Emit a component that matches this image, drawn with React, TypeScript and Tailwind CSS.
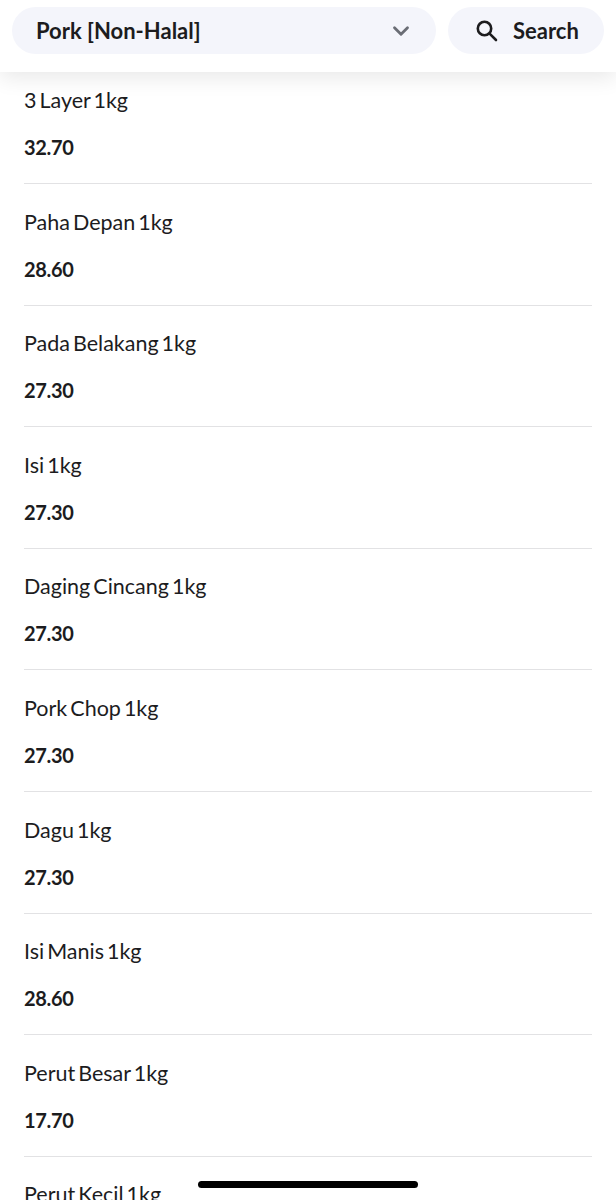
import { ChevronDown } from 'lucide-react';

const items = [
  { name: '3 Layer 1kg', price: '32.70' },
  { name: 'Paha Depan 1kg', price: '28.60' },
  { name: 'Pada Belakang 1kg', price: '27.30' },
  { name: 'Isi 1kg', price: '27.30' },
  { name: 'Daging Cincang 1kg', price: '27.30' },
  { name: 'Pork Chop 1kg', price: '27.30' },
  { name: 'Dagu 1kg', price: '27.30' },
  { name: 'Isi Manis 1kg', price: '28.60' },
  { name: 'Perut Besar 1kg', price: '17.70' },
  { name: 'Perut Kecil 1kg', price: '' },
];

const App = () => {
  return (
    <div className="relative h-[1200px] w-[616px] overflow-hidden bg-white font-['Lato','Noto_Sans',sans-serif] text-[#1c1c1e]">
      <header className="relative z-10 flex h-[72px] items-start gap-3 bg-white px-3 pt-[7px] shadow-[0_6px_20px_rgba(0,0,0,0.09)]">
        <div className="flex h-[47px] w-[424px] items-center justify-between rounded-full bg-[#f4f5fb] pl-6 pr-[22px]">
          <span className="text-[22px] font-bold">Pork [Non-Halal]</span>
          <ChevronDown size={26} strokeWidth={2.6} className="text-[#6a6d75]" />
        </div>
        <div className="flex h-[47px] w-[156px] items-center gap-[15px] rounded-full bg-[#f4f5fb] pl-[28px]">
          <svg width="22" height="22" viewBox="0 0 22 22" fill="none" stroke="currentColor" strokeWidth="2.6" strokeLinecap="round">
            <circle cx="8.5" cy="8.5" r="6.7" />
            <path d="M13.6 13.6 20 20" />
          </svg>
          <span className="text-[22px] font-bold">Search</span>
        </div>
      </header>
      <ul className="px-6 pt-[5px]">
        {items.map((item) => (
          <li key={item.name} className="mb-[14.6px] h-[107px] border-b border-[#e2e2e4] pt-[8px]">
            <div className="text-[21.5px] leading-[30px] [word-spacing:-2.5px]">{item.name}</div>
            <div className="pt-[17px] text-[20px] font-bold leading-[30px] tracking-[-0.3px]">{item.price}</div>
          </li>
        ))}
      </ul>
      <div className="absolute bottom-[12px] left-[198px] h-[7px] w-[220px] rounded-full bg-black" />
    </div>
  );
};

export default App;
